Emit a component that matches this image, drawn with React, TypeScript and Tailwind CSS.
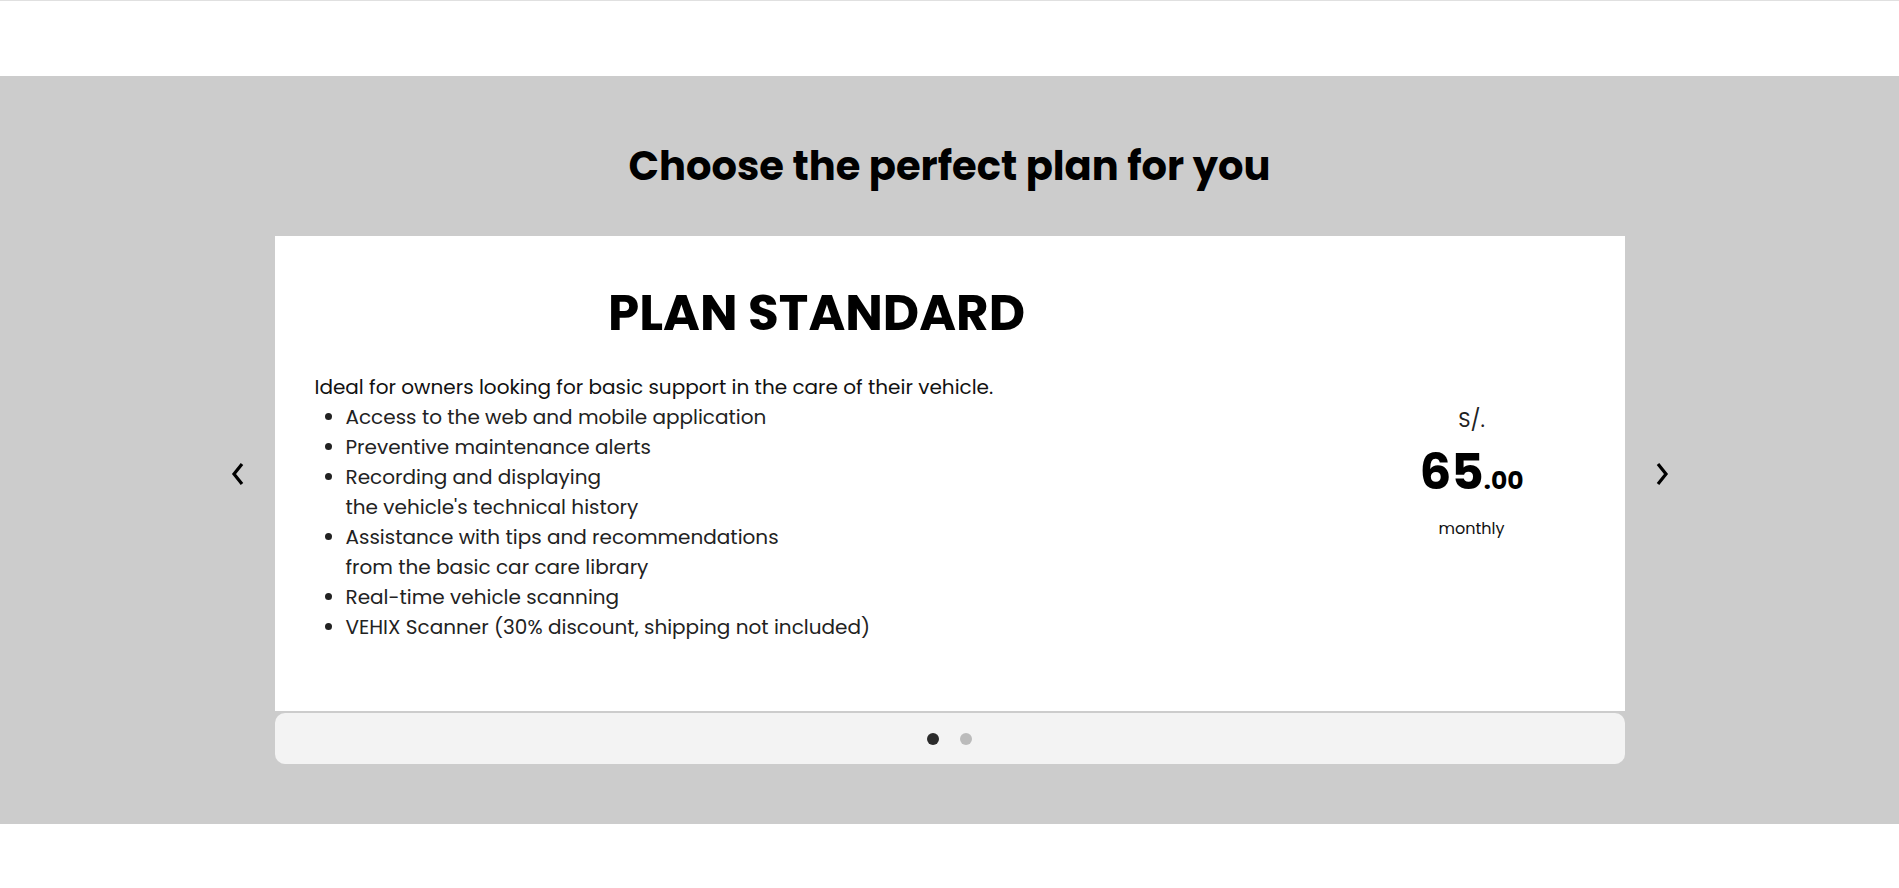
const features = [
  ["Access to the web and mobile application"],
  ["Preventive maintenance alerts"],
  ["Recording and displaying", "the vehicle's technical history"],
  ["Assistance with tips and recommendations", "from the basic car care library"],
  ["Real-time vehicle scanning"],
  ["VEHIX Scanner (30% discount, shipping not included)"],
];

const Chevron = ({ dir }: { dir: "left" | "right" }) => (
  <svg width="14" height="24" viewBox="0 0 14 24" fill="none">
    <polyline
      points={dir === "left" ? "11,2 3,12 11,22" : "3,2 11,12 3,22"}
      stroke="#000"
      strokeWidth="3.2"
      strokeLinejoin="miter"
    />
  </svg>
);

export default function App() {
  return (
    <div className="w-full bg-white font-['Poppins','Inter',sans-serif] text-black">
      {/* línea superior */}
      <div className="h-[76px] border-t border-[#e0e0e0]" />

      <section className="bg-[#cccccc] pt-[66px] pb-[60px] flex flex-col items-center">
        <h2 className="text-[40px] leading-[48px] font-bold">
          Choose the perfect plan for you
        </h2>

        <div className="mt-[46px] flex items-center gap-[24px]">
          <button className="w-[26px] flex justify-center">
            <Chevron dir="left" />
          </button>

          {/* tarjeta del plan */}
          <div className="w-[1350px] h-[475px] bg-white flex px-[40px]">
            <div className="w-[1004px] pt-[48px]">
              <h3 className="text-center text-[50px] leading-[58px] font-bold">
                PLAN STANDARD
              </h3>
              <p className="mt-[30px] text-[20px] leading-[30px] text-[#111]">
                Ideal for owners looking for basic support in the care of their vehicle.
              </p>
              <ul className="list-disc pl-[31px] text-[20px] leading-[30px] text-[#222]">
                {features.map((f, i) => (
                  <li key={i}>
                    {f.map((line, j) => (
                      <div key={j}>{line}</div>
                    ))}
                  </li>
                ))}
              </ul>
            </div>

            {/* precio */}
            <div className="flex-1 pl-[40px] flex flex-col items-center justify-center">
              <div className="text-[21px] leading-[28px] text-[#222]">S/.</div>
              <div className="mt-[12px] leading-[52px] font-bold flex items-baseline">
                <span className="text-[50px]">65</span>
                <span className="text-[25px]">.00</span>
              </div>
              <div className="mt-[10px] text-[16px] leading-[24px] text-[#111]">monthly</div>
            </div>
          </div>

          <button className="w-[26px] flex justify-center">
            <Chevron dir="right" />
          </button>
        </div>

        {/* paginación */}
        <div className="mt-[2px] w-[1350px] h-[51px] bg-[#f3f3f3] rounded-[10px] flex items-center justify-center gap-[21px]">
          <span className="w-[12px] h-[12px] rounded-full bg-[#2b2b2b]" />
          <span className="w-[12px] h-[12px] rounded-full bg-[#bbbbbb]" />
        </div>
      </section>

      <div className="h-[65px]" />
    </div>
  );
}
